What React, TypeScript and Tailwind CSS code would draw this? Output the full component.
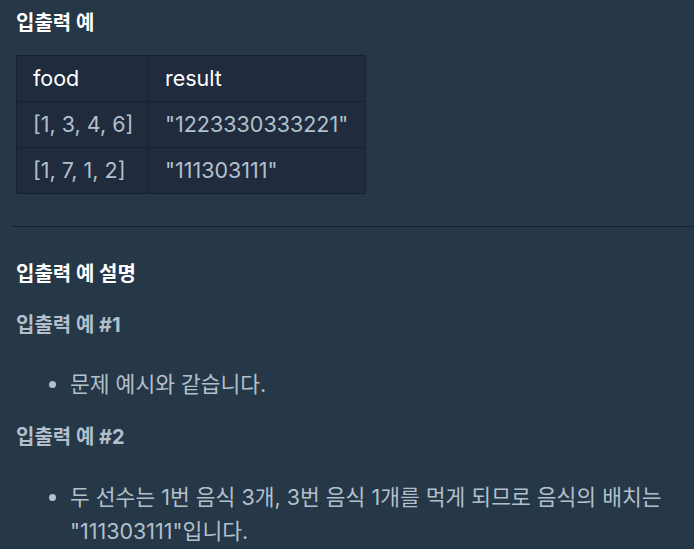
const rows = [
  ["[1, 3, 4, 6]", '"1223330333221"'],
  ["[1, 7, 1, 2]", '"111303111"'],
];

export default function App() {
  return (
    <div
      className="w-[694px] h-[549px] overflow-hidden bg-[#263747] text-[#b2c0cc] pl-4"
      style={{ fontFamily: 'Inter, "Noto Sans CJK KR", sans-serif' }}
    >
      <h5 className="pt-[8px] text-[20px] leading-[30px] font-bold text-white">입출력 예</h5>

      <table className="mt-[17px] w-[349px] table-fixed border-collapse whitespace-nowrap bg-[#202b3d] text-[21.5px]">
        <thead>
          <tr className="h-[46px]">
            <th className="w-[132px] border border-[#172130] px-4 text-left font-normal text-white">food</th>
            <th className="w-[217px] border border-[#172130] px-4 text-left font-normal text-white">result</th>
          </tr>
        </thead>
        <tbody>
          {rows.map((r) => (
            <tr key={r[0]} className="h-[46px]">
              <td className="border border-[#172130] px-4">{r[0]}</td>
              <td className="border border-[#172130] px-4">{r[1]}</td>
            </tr>
          ))}
        </tbody>
      </table>

      <hr className="mt-[32px] -ml-1 border-0 border-t border-[#172130]" />

      <h5 className="mt-[32px] text-[20px] leading-[30px] font-bold text-white">입출력 예 설명</h5>

      <h6 className="mt-[21px] text-[20px] leading-[30px] font-bold text-[#b2c0cc]">입출력 예 #1</h6>
      <ul className="mt-[27px] list-disc pl-[54px] text-[21.5px] leading-[34px]">
        <li>문제 예시와 같습니다.</li>
      </ul>

      <h6 className="mt-[21px] text-[20px] leading-[30px] font-bold text-[#b2c0cc]">입출력 예 #2</h6>
      <ul className="mt-[28px] list-disc pl-[54px] pr-4 text-[21.5px] leading-[34px]">
        <li>두 선수는 1번 음식 3개, 3번 음식 1개를 먹게 되므로 음식의 배치는 "111303111"입니다.</li>
      </ul>
    </div>
  );
}
